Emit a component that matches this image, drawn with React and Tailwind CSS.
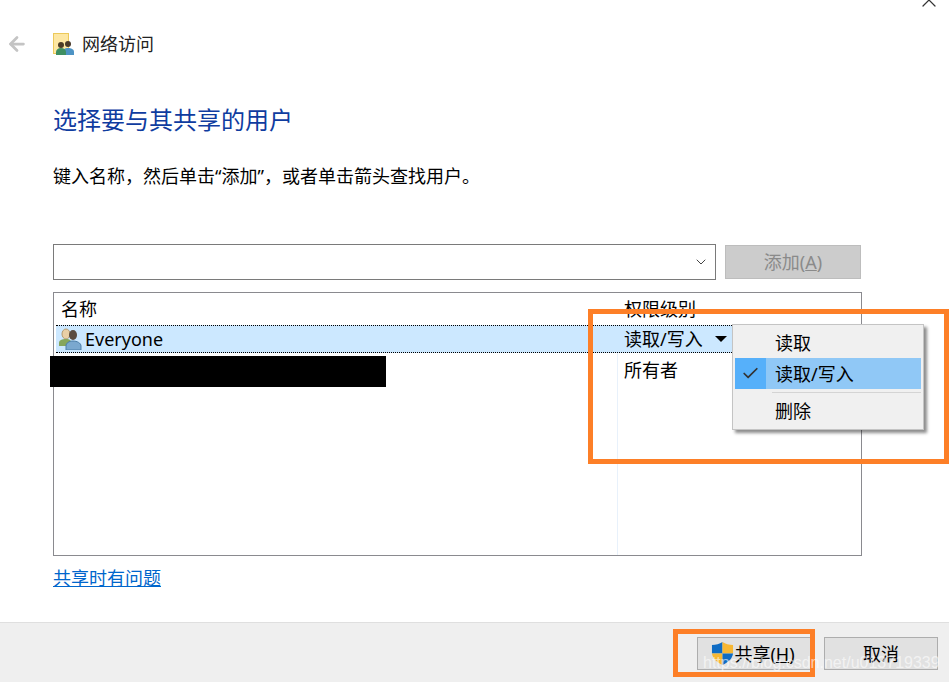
import React from "react";
import { ArrowLeft, Check, ChevronDown, X } from "lucide-react";

const cjk = "font-['Noto_Sans','Noto_Sans_CJK_SC',sans-serif]";

function FolderUsers() {
  return (
    <svg width="21" height="23" viewBox="0 0 21 23" className="shrink-0">
      <rect x="0.5" y="0.5" width="15" height="20" fill="#fde7a3" stroke="#ecc95a" />
      <circle cx="15" cy="11" r="3" fill="#4a3a2a" />
      <path d="M10 22v-3c0-3 2-4 5-4s6 1 6 4v3z" fill="#4d93c4" />
      <circle cx="8" cy="12" r="3" fill="#4b3b26" />
      <path d="M3 22v-3c0-2 2-4 5-4s5 2 5 4v3z" fill="#3f8f62" />
    </svg>
  );
}

function PeopleIcon() {
  return (
    <svg width="24" height="22" viewBox="0 0 24 22" className="shrink-0">
      <ellipse cx="8" cy="6" rx="4" ry="5" fill="#e9cfa6" stroke="#b79a6e" />
      <path d="M1 18v-3c0-3 3-4 7-4s5 1 5 4v3z" fill="#86a65c" />
      <ellipse cx="15" cy="7" rx="4" ry="5" fill="#5b4c40" />
      <path d="M8 22v-4c0-3 3-5 7-5s8 2 8 5v4z" fill="#7aa8cf" stroke="#4c7ea8" />
    </svg>
  );
}

function Shield() {
  return (
    <svg width="23" height="25" viewBox="0 0 24 26" className="shrink-0">
      <path d="M12 1 L12 13 L1 13 C1 8 1 5 1 4 C5 4 9 3 12 1z" fill="#0f6cc4" />
      <path d="M12 1 C15 3 19 4 23 4 C23 5 23 8 23 13 L12 13z" fill="#f7b733" />
      <path d="M1 13 L12 13 L12 25 C6 22 2 19 1 13z" fill="#f7b733" />
      <path d="M12 13 L23 13 C22 19 18 22 12 25z" fill="#0f6cc4" />
    </svg>
  );
}

function MenuRow({ label, checked }) {
  return (
    <div className={`flex h-[31px] shrink-0 items-center ${checked ? "bg-[#90c8f6]" : ""}`}>
      <div className={`flex h-full w-[31px] items-center justify-center ${checked ? "bg-[#56b0fa]" : ""}`}>
        {checked && <Check className="h-[19px] w-[19px] text-[#333]" strokeWidth={2.2} />}
      </div>
      <span className="ml-[9px]">{label}</span>
    </div>
  );
}

export default function App() {
  return (
    <div className={`relative flex h-[682px] w-[949px] flex-col overflow-hidden bg-white text-[18px] leading-none text-black ${cjk}`}>
      <div className="flex flex-1 flex-col px-[53px]">
        {/* title bar */}
        <div className="-ml-[47px] mt-[32px] flex h-[24px] items-center">
          <ArrowLeft className="h-[22px] w-[22px] text-[#c4c4c4]" strokeWidth={3} />
          <div className="ml-[25px]"><FolderUsers /></div>
          <span className="ml-[8px] text-[#222]">网络访问</span>
        </div>

        <h1 className="mt-[48px] text-[24px] font-normal leading-[32px] text-[#0f3c9f]">选择要与其共享的用户</h1>
        <p className="mt-[28px] leading-[24px]">键入名称，然后单击“添加”，或者单击箭头查找用户。</p>

        {/* name input */}
        <div className="mt-[56px] flex items-center">
          <div className="flex h-[36px] w-[663px] items-center justify-end border border-[#7a7a7a] pr-[6px]">
            <ChevronDown className="h-[16px] w-[16px] text-[#444]" strokeWidth={1.5} />
          </div>
          <div className="ml-[9px] flex h-[34px] w-[136px] items-center justify-center border border-[#bdbdbd] bg-[#cccccc] text-[#8a8a8a]">
            添加(<span className="underline">A</span>)
          </div>
        </div>

        {/* user list */}
        <div className="mt-[12px] flex h-[264px] w-[809px] flex-col border border-[#8a8a8f]">
          <div className="flex h-[32px] shrink-0 items-center">
            <span className="ml-[7px] w-[556px]">名称</span>
            <span className="ml-[7px]">权限级别</span>
          </div>
          <div className="ml-[2px] flex h-[28px] w-[804px] shrink-0 items-center border-y border-dotted border-black bg-[#cce8ff]">
            <div className="ml-[2px]"><PeopleIcon /></div>
            <span className="ml-[3px] w-[539px] text-[18px]">Everyone</span>
            <span>读取/写入</span>
            <span className="ml-[12px] h-0 w-0 border-x-[6px] border-t-[6px] border-x-transparent border-t-black"></span>
          </div>
          <div className="flex flex-1">
            <div className="w-[564px] border-r border-[#e8f1fb]"></div>
            <span className="ml-[6px] mt-[8px]">所有者</span>
          </div>
        </div>

        <a className="mt-[12px] w-fit text-[#0066cc] underline leading-[20px]">共享时有问题</a>
      </div>

      {/* footer buttons */}
      <div className="flex h-[60px] shrink-0 items-start justify-end gap-[12px] border-t border-[#dfdfdf] bg-[#efefef] pr-[11px] pt-[14px]">
        <div className="flex h-[33px] w-[115px] items-center justify-center border border-[#adadad] bg-[#e1e1e1] pr-[3px]">
          <Shield />
          <span>共享(<span className="underline">H</span>)</span>
        </div>
        <div className="flex h-[33px] w-[114px] items-center justify-center border border-[#adadad] bg-[#e1e1e1]">取消</div>
      </div>

      {/* close glyph, cropped by the top edge */}
      <X className="absolute left-[917px] top-[-12px] h-[24px] w-[24px] text-[#333]" strokeWidth={1.2} />

      {/* redaction */}
      <div className="absolute left-[50px] top-[356px] h-[31px] w-[336px] bg-black"></div>

      {/* context menu */}
      <div className="absolute left-[732px] top-[324px] flex h-[106px] w-[192px] flex-col border border-[#c4c4c4] bg-[#f0f0f0] p-[2px] shadow-[3px_3px_3px_rgba(0,0,0,0.45)]">
        <MenuRow label="读取" />
        <MenuRow label="读取/写入" checked />
        <div className="ml-[37px] mb-[2px] mt-[3px] h-px shrink-0 bg-[#d4d4d4]"></div>
        <MenuRow label="删除" />
      </div>

      {/* annotations */}
      <div className="absolute left-[588px] top-[309px] h-[155px] w-[361px] border-[5px] border-[#fd7f27]"></div>
      <div className="absolute left-[673px] top-[629px] h-[48px] w-[142px] border-[5px] border-[#fd7f27]"></div>

      {/* watermark */}
      <span className="absolute left-[703px] top-[655px] font-['Liberation_Sans',sans-serif] text-[16px] text-white/60">https://blog.csdn.net/u013719339</span>
    </div>
  );
}
